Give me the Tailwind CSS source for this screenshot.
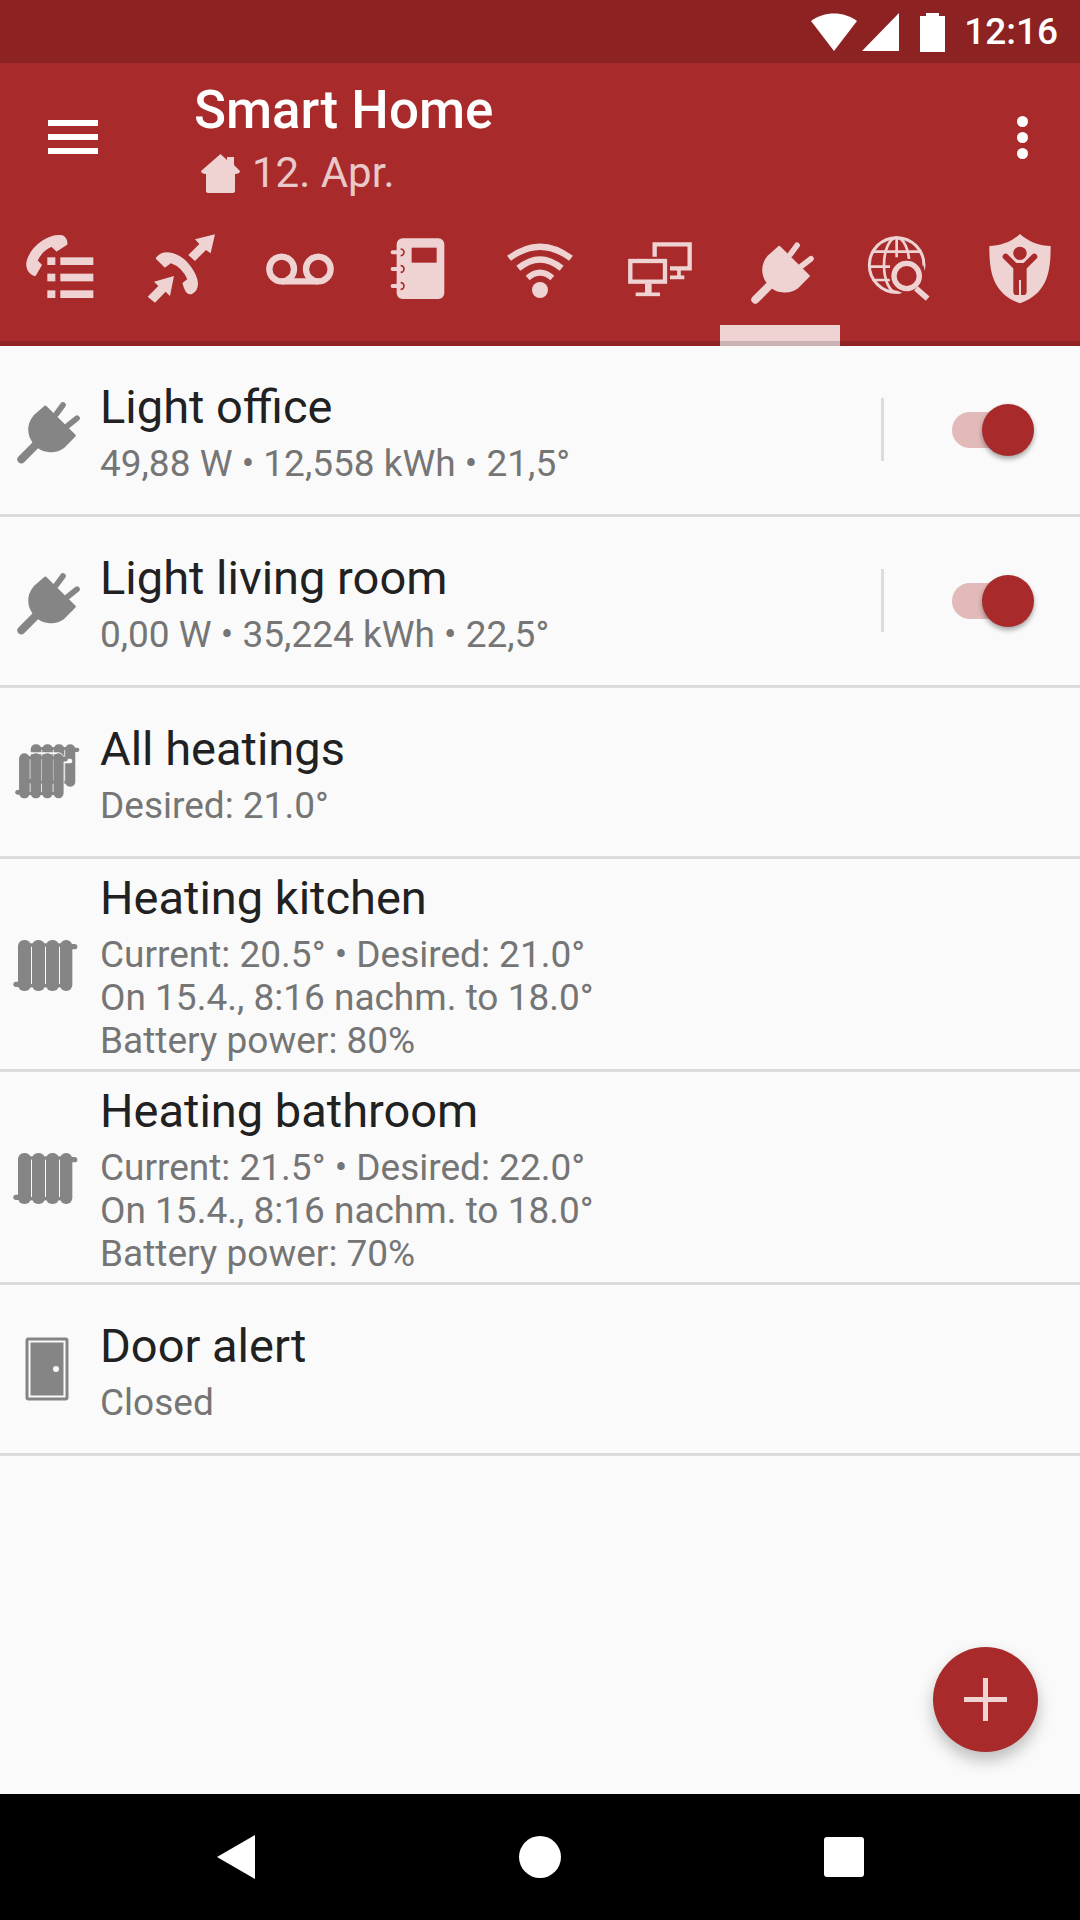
<!DOCTYPE html>
<html>
<head>
<meta charset="utf-8">
<script src="https://cdn.jsdelivr.net/npm/@tailwindcss/browser@4"></script>
</head>
<body class="m-0">
<svg width="0" height="0" class="absolute">
  <defs>
    <g id="plug">
      <path d="M137,170 L225,257 L190,292 C165,310 125,305 108,283 C85,260 82,225 105,198 Z" stroke="currentColor" stroke-width="7" stroke-linejoin="round"/>
      <path d="M170,192 L190,165 M203,228 L232,205" fill="none" stroke="currentColor" stroke-width="17" stroke-linecap="round"/>
      <path d="M115,278 L65,328" fill="none" stroke="currentColor" stroke-width="24" stroke-linecap="round"/>
    </g>
    <g id="rad">
      <rect x="54" y="660" width="39" height="153" rx="18"/>
      <rect x="96" y="660" width="39" height="153" rx="18"/>
      <rect x="138" y="660" width="39" height="153" rx="18"/>
      <rect x="180" y="660" width="37" height="153" rx="18"/>
      <rect x="70" y="670" width="130" height="10"/>
      <rect x="70" y="792" width="130" height="10"/>
      <rect x="40" y="785" width="30" height="16" rx="8"/>
      <rect x="200" y="672" width="32" height="16" rx="8"/>
    </g>
  </defs>
</svg>
<div class="relative flex flex-col w-[1080px] h-[1920px] overflow-hidden bg-[#fafafa]" style="font-family:Roboto,sans-serif">

  <!-- status bar -->
  <div class="flex h-[63px] shrink-0 items-center justify-end bg-[#8c2222] pr-[22px] text-white">
    <svg width="46" height="38" viewBox="0 0 46 38" class="mb-[-1px]"><path d="M0,8 C13,-2 33,-2 46,8 L23,38 Z" fill="#fff"/></svg>
    <svg width="37" height="38" viewBox="0 0 37 38" class="ml-[5px] mb-[-1px]"><path d="M0,38 L37,0 V38 Z" fill="#fff"/></svg>
    <svg width="25" height="39" viewBox="0 0 25 39" class="ml-[21px] mb-[-1px]"><path d="M6,3 V0 H19 V3 H25 V39 H0 V3 Z" fill="#fff"/></svg>
    <span class="ml-[19px] text-[37px] leading-[63px] font-medium">12:16</span>
  </div>

  <!-- app bar -->
  <div class="h-[283px] shrink-0 bg-[#a82a2a] flex flex-col relative z-10">
    <div class="flex h-[166px] shrink-0">
      <div class="w-[195px] flex flex-col gap-[8px] pl-[48px] pt-[57px]">
        <div class="w-[50px] h-[6px] bg-white"></div>
        <div class="w-[50px] h-[6px] bg-white"></div>
        <div class="w-[50px] h-[6px] bg-white"></div>
      </div>
      <div class="flex-1 flex flex-col">
        <div class="text-[52.9px] leading-[60px] font-medium text-white mt-[17px] ml-[-1px]">Smart Home</div>
        <div class="flex items-center mt-[8px] ml-[6px]">
          <svg width="39" height="39" viewBox="0 0 39 39"><path d="M19.5,0 L26,6 V3 H33 V11 L39,17 C39,19 37,20 34,20 V37 C34,38 33,39 32,39 H7 C6,39 5,38 5,37 V20 C2,20 0,19 0,17 Z" fill="#efd3d3"/></svg>
          <span class="text-[42px] leading-[52px] text-white/75 ml-[12px] mt-[-1px]">12. Apr.</span>
        </div>
      </div>
      <div class="w-[63px] pt-[53px] flex flex-col gap-[5px] items-start">
        <div class="w-[11px] h-[11px] rounded-full bg-white"></div>
        <div class="w-[11px] h-[11px] rounded-full bg-white"></div>
        <div class="w-[11px] h-[11px] rounded-full bg-white"></div>
      </div>
    </div>
    <!-- tabs -->
    <div class="relative h-[117px] grid grid-cols-9 text-[#efd3d3]">
      <div class="relative">
        <svg class="absolute left-0 top-[-9px]" width="120" height="90" viewBox="0 0 120 90" fill="currentColor">
          <g transform="scale(.3333)">
            <path d="M187,48 C150,42 100,75 84,118 C76,140 86,160 105,166 L123,135 L110,122 C120,102 135,85 155,78 L170,92 L200,72 C200,60 195,52 187,48 Z" stroke="currentColor" stroke-width="5" stroke-linejoin="round"/>
            <rect x="142" y="112" width="24" height="23"/><rect x="142" y="161" width="24" height="23"/><rect x="142" y="211" width="24" height="23"/>
            <rect x="181" y="112" width="99" height="23"/><rect x="181" y="161" width="99" height="23"/><rect x="181" y="211" width="99" height="23"/>
          </g>
        </svg>
      </div>
      <div class="relative">
        <svg class="absolute left-0 top-[-9px]" width="120" height="90" viewBox="120 0 120 90" fill="currentColor">
          <g transform="scale(.3333)">
            <path d="M470,115 C490,85 540,100 570,140 C595,175 600,205 575,220 C565,222 558,218 550,190 L565,178 C555,155 535,135 512,127 L495,140 Z" stroke="currentColor" stroke-width="5" stroke-linejoin="round"/>
            <path d="M645,43 L585,58 L598,72 L565,105 L585,123 L618,90 L632,100 Z"/>
            <path d="M522,168 L462,185 L475,198 L443,230 L465,248 L497,215 L510,228 Z"/>
          </g>
        </svg>
      </div>
      <div class="relative">
        <svg class="absolute left-0 top-[-9px]" width="120" height="90" viewBox="0 0 120 90" fill="none" stroke="currentColor">
          <g transform="scale(.3333)">
            <circle cx="125" cy="147" r="37" stroke-width="19"/>
            <circle cx="235" cy="147" r="37" stroke-width="19"/>
            <path d="M125,184 H235" stroke-width="19"/>
          </g>
        </svg>
      </div>
      <div class="relative">
        <svg class="absolute left-0 top-[-9px]" width="120" height="90" viewBox="120 0 120 90" fill="currentColor">
          <g transform="scale(.3333)">
            <rect x="470" y="55" width="143" height="182" rx="18"/>
            <rect x="515" y="83" width="75" height="45" fill="#a82a2a"/>
            <path d="M458,97 H480 M458,147 H480 M458,198 H480" stroke="currentColor" stroke-width="12" stroke-linecap="round"/>
            <path d="M482,87 a10,10 0 0 1 0,20 M482,137 a10,10 0 0 1 0,20 M482,188 a10,10 0 0 1 0,20" fill="none" stroke="#a82a2a" stroke-width="5"/>
          </g>
        </svg>
      </div>
      <div class="relative">
        <svg class="absolute left-0 top-[-9px]" width="120" height="90" viewBox="0 0 120 90" fill="none" stroke="currentColor">
          <g transform="scale(.3333)">
            <circle cx="180" cy="210" r="24" fill="currentColor" stroke="none"/>
            <path d="M87,115 Q180,45 273,115" stroke-width="19"/>
            <path d="M115,145 Q180,92 245,145" stroke-width="19"/>
            <path d="M143,174 Q180,142 217,174" stroke-width="18"/>
          </g>
        </svg>
      </div>
      <div class="relative">
        <svg class="absolute left-0 top-[-9px]" width="120" height="90" viewBox="120 0 120 90" fill="none" stroke="currentColor">
          <g transform="scale(.3333)">
            <path d="M524,110 V73 H629 V145 H570" stroke-width="13"/>
            <path d="M597,150 V172 M570,172 H613" stroke-width="11"/>
            <rect x="451" y="123" width="104" height="62" stroke-width="13"/>
            <path d="M505,190 V222" stroke-width="20"/>
            <path d="M467,223 H540" stroke-width="11"/>
          </g>
        </svg>
      </div>
      <div class="relative">
        <svg class="absolute left-[27px] top-[8px]" width="70" height="70" viewBox="40 140 210 210" fill="currentColor"><use href="#plug"/></svg>
        <div class="absolute left-0 right-0 bottom-0 h-[21px] bg-[#efd3d3]"></div>
      </div>
      <div class="relative">
        <svg class="absolute left-0 top-[-9px]" width="120" height="90" viewBox="0 0 120 90" fill="none" stroke="currentColor">
          <g transform="scale(.3333)">
            <circle cx="170" cy="135" r="82" stroke-width="9"/>
            <ellipse cx="170" cy="135" rx="38" ry="82" stroke-width="8"/>
            <path d="M170,53 V112 M100,95 H240 M88,140 H150 M98,180 H150" stroke-width="8"/>
            <circle cx="200" cy="168" r="52" fill="#a82a2a" stroke="none"/>
            <path d="M250,135 L262,180 L225,225 L180,225 Z" fill="#a82a2a" stroke="none"/>
            <circle cx="200" cy="168" r="38" stroke-width="16"/>
            <path d="M228,205 L263,236" stroke-width="17"/>
          </g>
        </svg>
      </div>
      <div class="relative">
        <svg class="absolute left-0 top-[-9px]" width="120" height="90" viewBox="120 0 120 90" fill="currentColor">
          <g transform="scale(.3333)">
            <path d="M540,42 C565,65 600,78 632,78 C632,150 625,220 540,250 C455,220 448,150 448,78 C480,78 515,65 540,42 Z"/>
            <circle cx="540" cy="100" r="20" fill="#a82a2a"/>
            <path d="M497,110 L525,138 H555 L583,110" fill="none" stroke="#a82a2a" stroke-width="18" stroke-linecap="round" stroke-linejoin="round"/>
            <rect x="520" y="130" width="40" height="95" rx="10" fill="#a82a2a"/>
            <rect x="537" y="180" width="6" height="50"/>
          </g>
        </svg>
      </div>
    </div>
    <div class="absolute left-0 right-0 bottom-0 h-[5px] bg-black/15"></div>
  </div>

  <!-- list -->
  <div class="flex flex-col text-[#212121]">
    <!-- Light office -->
    <div class="flex items-center h-[171px] border-b-[3px] border-[#dcdcdc] shrink-0">
      <div class="w-[100px] shrink-0 pl-[13px]"><svg class="text-[#858585]" width="70" height="70" viewBox="40 135 210 210" fill="currentColor"><use href="#plug"/></svg></div>
      <div class="flex-1 pt-[4px]">
        <div class="text-[47px] leading-[56px]">Light office</div>
        <div class="text-[37px] leading-[43px] text-[#757575] mt-[7px]">49,88 W • 12,558 kWh • 21,5°</div>
      </div>
      <div class="w-[3px] h-[63px] bg-[#dcdcdc] mt-[-2px]"></div>
      <div class="relative w-[196px] h-[60px] mt-[-1px]">
        <div class="absolute left-[68px] top-[12px] w-[76px] h-[36px] rounded-full bg-[#e2baba]"></div>
        <div class="absolute left-[98px] top-[4px] w-[52px] h-[52px] rounded-full bg-[#a82a2a] shadow-[0_3px_5px_rgba(0,0,0,0.35)]"></div>
      </div>
    </div>
    <!-- Light living room -->
    <div class="flex items-center h-[171px] border-b-[3px] border-[#dcdcdc] shrink-0">
      <div class="w-[100px] shrink-0 pl-[13px]"><svg class="text-[#858585]" width="70" height="70" viewBox="40 135 210 210" fill="currentColor"><use href="#plug"/></svg></div>
      <div class="flex-1 pt-[4px]">
        <div class="text-[47px] leading-[56px]">Light living room</div>
        <div class="text-[37px] leading-[43px] text-[#757575] mt-[7px]">0,00 W • 35,224 kWh • 22,5°</div>
      </div>
      <div class="w-[3px] h-[63px] bg-[#dcdcdc] mt-[-2px]"></div>
      <div class="relative w-[196px] h-[60px] mt-[-1px]">
        <div class="absolute left-[68px] top-[12px] w-[76px] h-[36px] rounded-full bg-[#e2baba]"></div>
        <div class="absolute left-[98px] top-[4px] w-[52px] h-[52px] rounded-full bg-[#a82a2a] shadow-[0_3px_5px_rgba(0,0,0,0.35)]"></div>
      </div>
    </div>
    <!-- All heatings -->
    <div class="flex items-center h-[171px] border-b-[3px] border-[#dcdcdc] shrink-0">
      <div class="w-[100px] shrink-0 pl-[13px]"><svg width="70" height="70" viewBox="39 51 210 210" fill="#858585">
        <use href="#rad" transform="translate(47.9,-474.8) scale(.82,.83)"/>
        <rect x="58" y="100" width="132" height="135" rx="16" fill="none" stroke="#fafafa" stroke-width="6"/>
        <rect x="185" y="116" width="32" height="14" rx="7" fill="#fafafa"/>
        <use href="#rad" transform="translate(12.9,-480.8) scale(.82,.88)"/>
      </svg></div>
      <div class="flex-1 pt-[4px]">
        <div class="text-[47px] leading-[56px]">All heatings</div>
        <div class="text-[37px] leading-[43px] text-[#757575] mt-[7px]">Desired: 21.0°</div>
      </div>
    </div>
    <!-- Heating kitchen -->
    <div class="flex items-center h-[213px] border-b-[3px] border-[#dcdcdc] shrink-0">
      <div class="w-[100px] shrink-0 pl-[13px]"><svg width="70" height="70" viewBox="39 627 210 210" fill="#858585"><use href="#rad"/></svg></div>
      <div class="flex-1 pt-[4px]">
        <div class="text-[47px] leading-[56px]">Heating kitchen</div>
        <div class="text-[37px] leading-[43px] text-[#757575] mt-[7px]">Current: 20.5° • Desired: 21.0°<br>On 15.4., 8:16 nachm. to 18.0°<br>Battery power: 80%</div>
      </div>
    </div>
    <!-- Heating bathroom -->
    <div class="flex items-center h-[213px] border-b-[3px] border-[#dcdcdc] shrink-0">
      <div class="w-[100px] shrink-0 pl-[13px]"><svg width="70" height="70" viewBox="39 627 210 210" fill="#858585"><use href="#rad"/></svg></div>
      <div class="flex-1 pt-[4px]">
        <div class="text-[47px] leading-[56px]">Heating bathroom</div>
        <div class="text-[37px] leading-[43px] text-[#757575] mt-[7px]">Current: 21.5° • Desired: 22.0°<br>On 15.4., 8:16 nachm. to 18.0°<br>Battery power: 70%</div>
      </div>
    </div>
    <!-- Door alert -->
    <div class="flex items-center h-[171px] border-b-[3px] border-[#dcdcdc] shrink-0">
      <div class="w-[100px] shrink-0 pl-[25px]"><svg width="44" height="64" viewBox="0 0 44 64">
        <rect x="0.5" y="0.5" width="43" height="63" rx="3" fill="#858585"/>
        <rect x="3.5" y="3.5" width="37" height="57" fill="#fafafa"/>
        <rect x="5.5" y="5.5" width="33" height="53" fill="#858585"/>
        <circle cx="31" cy="32" r="3" fill="#fafafa"/>
      </svg></div>
      <div class="flex-1 pt-[4px]">
        <div class="text-[47px] leading-[56px]">Door alert</div>
        <div class="text-[37px] leading-[43px] text-[#757575] mt-[7px]">Closed</div>
      </div>
    </div>
  </div>

  <!-- FAB -->
  <div class="absolute left-[933px] top-[1647px] w-[105px] h-[105px] rounded-full bg-[#a82a2a] shadow-[0_8px_16px_rgba(0,0,0,0.25)] flex items-center justify-center">
    <svg width="43" height="43" viewBox="0 0 43 43"><path d="M19,0 H24 V19 H43 V24 H24 V43 H19 V24 H0 V19 H19 Z" fill="#f0d4d4"/></svg>
  </div>

  <!-- nav bar -->
  <div class="absolute left-0 right-0 bottom-0 h-[126px] bg-black grid grid-cols-3 items-center">
    <div class="pl-[217px] flex"><svg width="38" height="44" viewBox="0 0 38 44"><path d="M38,0 V44 L0,22 Z" fill="#fff"/></svg></div>
    <div class="flex justify-center"><div class="w-[42px] h-[42px] rounded-full bg-white"></div></div>
    <div class="pl-[104px] flex"><div class="w-[40px] h-[40px] rounded-[3px] bg-white"></div></div>
  </div>
</div>
</body>
</html>
